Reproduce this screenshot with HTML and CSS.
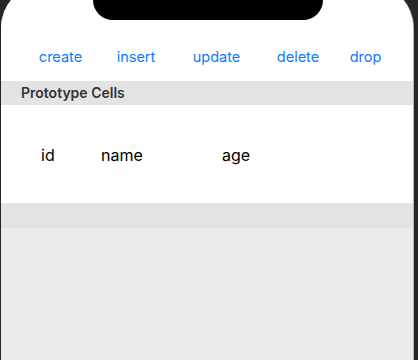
FILE: index.html
```html
<!DOCTYPE html>
<html>
<head>
<meta charset="utf-8">
<link rel="stylesheet" href="styles.css">
</head>
<body>
<div class="screen">
  <div class="notch"></div>
  <div class="toolbar">
    <span class="btn">create</span>
    <span class="btn">insert</span>
    <span class="btn">update</span>
    <span class="btn">delete</span>
    <span class="btn">drop</span>
  </div>
  <div class="section-header">Prototype Cells</div>
  <div class="cell">
    <span>id</span>
    <span>name</span>
    <span>age</span>
  </div>
  <div class="footer-band"></div>
</div>
</body>
</html>
```

FILE: styles.css
```css
html, body {
  margin: 0;
  padding: 0;
  height: 100%;
  overflow: hidden;
}
body {
  background: #262626;
  font-family: Inter, "Liberation Sans", Arial, sans-serif;
}
.screen {
  position: relative;
  margin: -16px 0 0 1px;
  width: 413px;
  height: 376px;
  box-sizing: border-box;
  border-right: 1px solid #b9b9b9;
  border-radius: 44px 44px 0 0;
  background: #ebebeb;
  overflow: hidden;
}
.notch {
  position: absolute;
  top: 0;
  left: 92px;
  width: 230px;
  height: 36px;
  background: #000;
  border-radius: 0 0 20px 20px;
}
.toolbar {
  height: 97px;
  box-sizing: border-box;
  background: #fff;
  display: grid;
  grid-template-columns: 77px 74px 87px 76px 59px;
  justify-items: center;
  align-items: end;
  padding: 0 0 14px 21px;
}
.btn {
  color: #0a7aff;
  font-size: 14.5px;
  line-height: 20px;
}
.section-header {
  height: 24px;
  background: #e3e3e3;
  color: #333;
  font-weight: 600;
  font-size: 14px;
  line-height: 24px;
  padding-left: 20px;
}
.cell {
  height: 98px;
  box-sizing: border-box;
  padding: 2px 0 0 40px;
  background: #fff;
  display: grid;
  grid-template-columns: 60px 121px auto;
  align-items: center;
  font-size: 16px;
  line-height: 20px;
  color: #000;
}
.footer-band {
  height: 25px;
  background: #e3e3e3;
}
```
